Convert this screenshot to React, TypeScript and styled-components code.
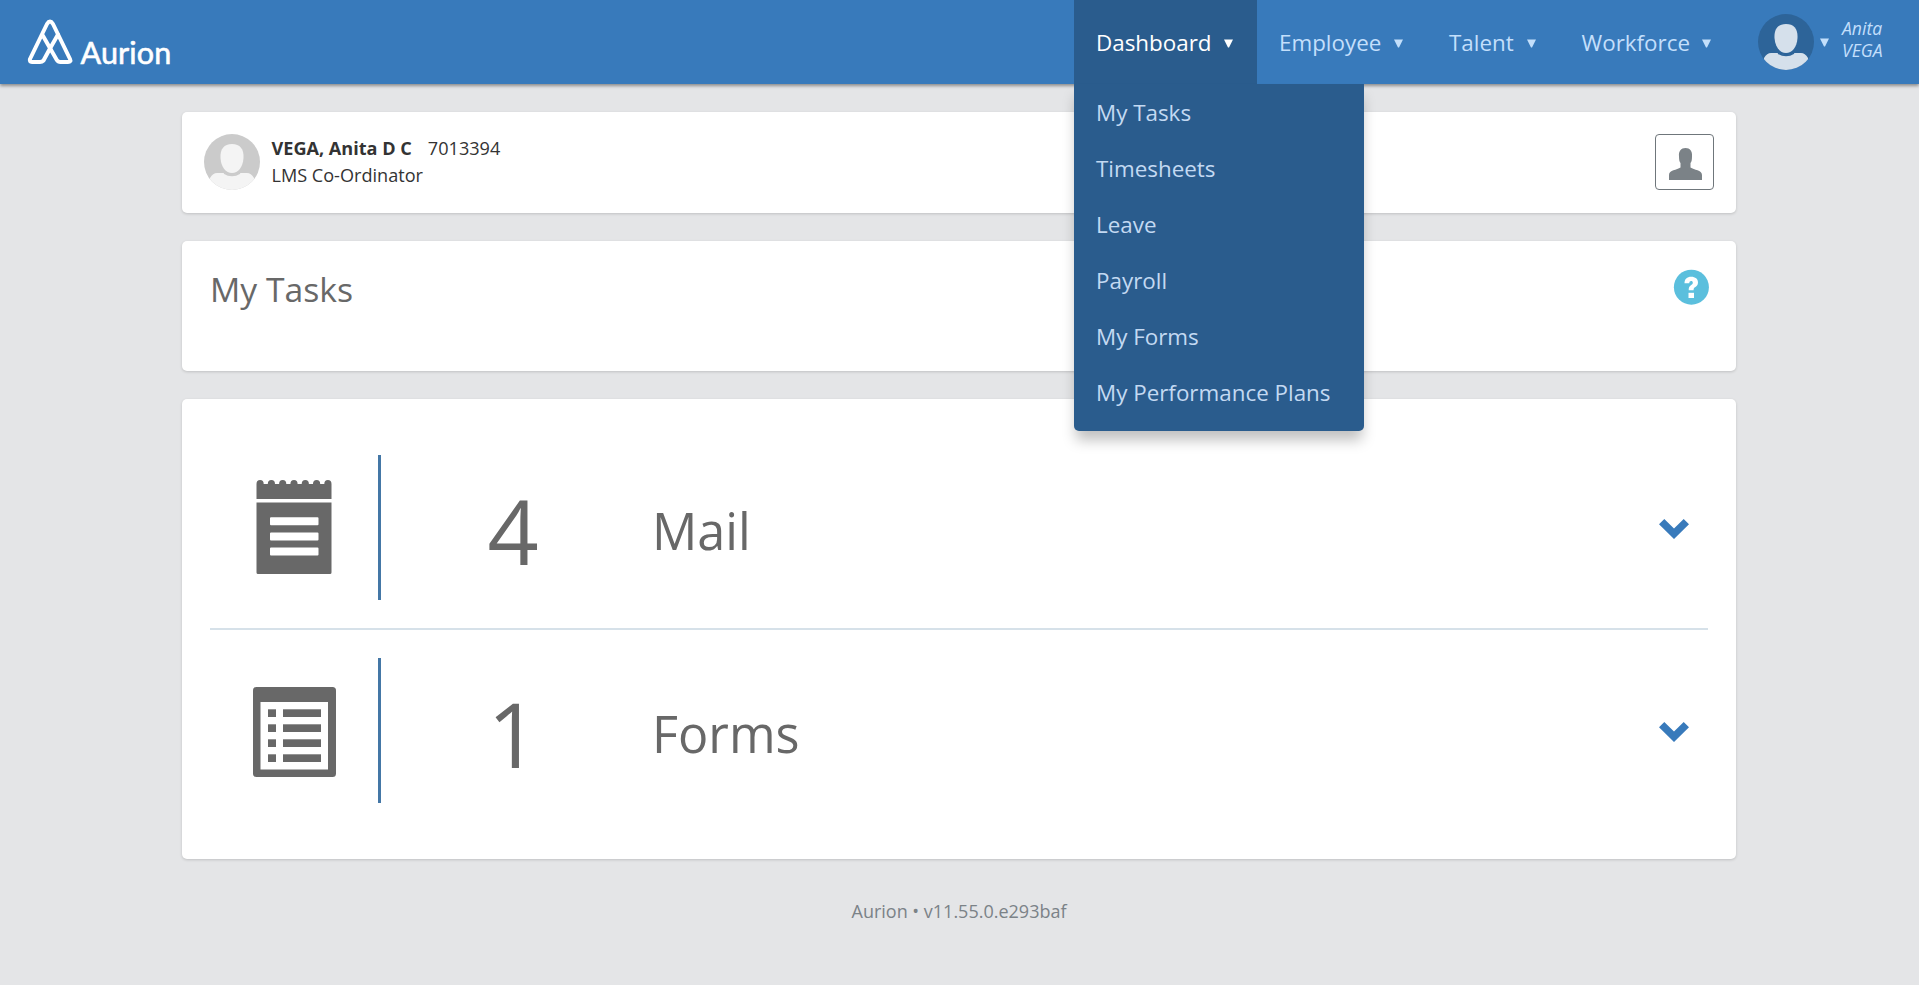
import React from "react";
import styled, { createGlobalStyle } from "styled-components";

const GlobalStyle = createGlobalStyle`
  *, *::before, *::after { box-sizing: border-box; }
  html, body { margin: 0; min-height: 100%; background: #e4e5e7; }
  body { font-family: "Open Sans", "Noto Sans", sans-serif; color: #333; }
`;

const Page = styled.div`
  min-height: 985px;
`;

const Header = styled.header`
  position: relative;
  z-index: 2;
  display: flex;
  justify-content: space-between;
  height: 84px;
  padding-right: 35px;
  background: #387abb;
  box-shadow: 0 2px 3px rgba(0, 0, 0, 0.38);
`;

const Brand = styled.div`
  display: flex;
  align-items: flex-start;
  padding: 19px 0 0 27px;
`;

const BrandMark = styled.svg`
  width: 47px;
  height: 46px;
`;

const BrandName = styled.span`
  margin: 12.5px 0 0 6.5px;
  font: 400 30.5px/40px Lato, sans-serif;
  letter-spacing: 0.15px;
  color: #fff;
  -webkit-text-stroke: 0.6px #fff;
`;

const Nav = styled.nav`
  display: flex;
`;

const NavItem = styled.div<{ $active?: boolean; $width: number }>`
  position: relative;
  display: flex;
  align-items: center;
  justify-content: space-between;
  width: ${(p) => p.$width}px;
  padding: 2px 24px 0 22px;
  font-size: 22.4px;
  line-height: 28px;
  white-space: nowrap;
  color: ${(p) => (p.$active ? "#fff" : "#c3dffb")};
  background: ${(p) => (p.$active ? "#2a5c8d" : "transparent")};
`;

const ArrowShape = styled.svg`
  display: block;
  width: 9px;
  height: 9px;
  fill: currentColor;
`;

const Menu = styled.ul`
  position: absolute;
  top: 84px;
  left: 0;
  width: 290.4px;
  height: 347px;
  margin: 0;
  padding: 0 0 11px;
  list-style: none;
  color: #c3d9f2;
  background: #2a5c8d;
  border-radius: 0 0 5px 5px;
  box-shadow: 0 11px 14px -2px rgba(0, 0, 0, 0.25);
`;

const MenuItem = styled.li`
  height: 56px;
  padding: 15px 22px 0;
`;

const UserMenu = styled.div`
  display: flex;
  align-items: flex-start;
  padding: 14px 0 0 23px;
  color: #c3dffb;
`;

const UserArrow = styled.div`
  margin: 24px 13px 0 6px;
`;

const UserName = styled.div`
  width: 42px;
  margin-top: 3px;
  font-size: 17.6px;
  line-height: 22px;
  font-style: italic;
`;

const Main = styled.main`
  display: flex;
  flex-direction: column;
  gap: 28px;
  width: 1554px;
  margin: 28px 0 0 182px;
`;

const Card = styled.section`
  background: #fff;
  border-radius: 5px;
  box-shadow: 0 1px 3px rgba(0, 0, 0, 0.16);
`;

const PersonCard = styled(Card)`
  display: flex;
  align-items: flex-start;
  height: 101px;
  padding: 22px;
`;

const PersonText = styled.div`
  flex: 1;
  margin: 1px 0 0 11.5px;
  font-size: 18.1px;
  line-height: 27px;
`;

const PersonId = styled.span`
  margin-left: 16px;
`;

const ProfileButton = styled.button`
  display: flex;
  align-items: center;
  justify-content: center;
  width: 59px;
  height: 56px;
  padding: 3px 0 0 2px;
  background: #fff;
  border: 1px solid #6f767b;
  border-radius: 4px;
`;

const TitleCard = styled(Card)`
  display: flex;
  align-items: flex-start;
  justify-content: space-between;
  height: 130px;
  padding: 28px 27px 0 28px;
`;

const Title = styled.h1`
  margin: 0;
  font-size: 33.7px;
  font-weight: 400;
  line-height: 41px;
  color: #686868;
`;

const TaskCard = styled(Card)`
  height: 460px;
  padding: 28px;
`;

const TaskRow = styled.div`
  display: flex;
  align-items: center;
  height: 201px;
  color: #686868;

  & + & {
    height: 203px;
    border-top: 2px solid #d6e1e9;
  }
`;

const TaskIcon = styled.div<{ $drop?: number }>`
  display: flex;
  align-items: center;
  justify-content: center;
  width: 168px;
  padding-top: ${(p) => p.$drop ?? 0}px;
`;

const Rule = styled.div`
  width: 3px;
  height: 145px;
  background: #4477a6;
`;

const Count = styled.div`
  width: 264px;
  padding-top: 4px;
  text-align: center;
  font-size: 89.6px;
  line-height: 120px;
`;

const TaskName = styled.div`
  flex: 1;
  padding: 6px 0 0 7px;
  font-size: 50.4px;
  line-height: 70px;
`;

const Chevron = styled.svg`
  width: 30px;
  height: 20px;
  margin: 3px 19px 0 0;
  fill: #387abb;
`;

const Footer = styled.footer`
  margin-top: 38px;
  padding-right: 1px;
  text-align: center;
  font-size: 18px;
  line-height: 28px;
  color: #7b8287;
`;

const Arrow = () => (
  <ArrowShape viewBox="0 0 9 9">
    <path d="M0 0.500H9L5 8.500H4Z" />
  </ArrowShape>
);

const Avatar = ({ id, back, front }: { id: string; back: string; front: string }) => (
  <svg width="56" height="56" viewBox="0 0 56 56">
    <clipPath id={id}>
      <circle cx="28" cy="28" r="28" />
    </clipPath>
    <circle cx="28" cy="28" r="28" fill={back} />
    <g clipPath={`url(#${id})`} fill={front}>
      <path d="M28 10C36 10 40 15 39.500 24C39 33 34 39 28 39C22 39 17 33 16.500 24C16 15 20 10 28 10Z" />
      <path d="M13 39H20Q28 43.500 36 39H43Q47 39 50 44V56H6V44Q9 39 13 39Z" />
      <path d="M20 39.200Q28 44 36 39.200" fill="none" stroke={back} strokeWidth="1.400" />
    </g>
  </svg>
);

const PersonIcon = () => (
  <svg width="33" height="32" viewBox="0 0 33 32" fill="#7b8287">
    <path d="M16.500 0C21 0 23.500 3 23 8.500C23 12 22.500 14 21.500 15V19.500C25 22 33 22 33 27V32H0V27C0 22 8 22 11.500 19.500V15C10.500 14 10 12 10 8.500C9.500 3 12 0 16.500 0Z" />
  </svg>
);

const HelpIcon = () => (
  <svg width="36" height="36" viewBox="0 0 36 36">
    <circle cx="18.400" cy="18.200" r="17.500" fill="#5bbfdd" />
    <path
      d="M11.500 14.300C11.500 10 14 7.800 18.200 7.800C22.300 7.800 25 10 25 13.500C25 16.300 23.500 17.300 22 18.300C20.800 19.100 20.600 19.500 20.600 21.300H15.700C15.600 18.300 16.400 17 18.200 15.900C19.300 15.200 19.800 14.800 19.800 13.700C19.800 12.600 19.200 12 18.200 12C16.900 12 16.400 12.800 16.300 14.300Z"
      fill="#fff"
    />
    <path d="M15.500 23.800H21V29H15.500Z" fill="#fff" />
  </svg>
);

const MailIcon = () => (
  <svg width="76" height="95" viewBox="0 0 76 95" fill="currentColor">
    <path d="M0.500 19V4A3.600 4 0 0 1 7.700 4H11.800A3.600 4 0 0 1 19 4H23.100A3.600 4 0 0 1 30.300 4H34.400A3.600 4 0 0 1 41.600 4H45.700A3.600 4 0 0 1 52.900 4H57A3.600 4 0 0 1 64.200 4H68.300A3.600 4 0 0 1 75.500 4V19Z" />
    <path
      fillRule="evenodd"
      d="M0.500 22.500H75.500V92.500Q75.500 94 74 94H2Q0.500 94 0.500 92.500ZM15 37.300Q14 37.300 14 38.300V44.300Q14 45.300 15 45.300H61.500Q62.500 45.300 62.500 44.300V38.300Q62.500 37.300 61.500 37.300ZM15 52.400Q14 52.400 14 53.400V59.400Q14 60.400 15 60.400H61.500Q62.500 60.400 62.500 59.400V53.400Q62.500 52.400 61.500 52.400ZM15 67.500Q14 67.500 14 68.500V74.500Q14 75.500 15 75.500H61.500Q62.500 75.500 62.500 74.500V68.500Q62.500 67.500 61.500 67.500Z"
    />
  </svg>
);

const FormsIcon = () => (
  <svg width="83" height="90" viewBox="0 0 83 90">
    <rect width="83" height="90" rx="3.500" fill="currentColor" />
    <rect x="7.500" y="15" width="67.500" height="67.500" fill="#fff" />
    {[22.3, 37.3, 52.3, 67.3].map((y) => (
      <g key={y} fill="currentColor">
        <rect x="15" y={y} width="8" height="7.700" />
        <rect x="30" y={y} width="38" height="7.700" />
      </g>
    ))}
  </svg>
);

const menuItems = ["My Tasks", "Timesheets", "Leave", "Payroll", "My Forms", "My Performance Plans"];

const tasks = [
  { name: "Mail", count: 4, icon: <MailIcon />, drop: 0 },
  { name: "Forms", count: 1, icon: <FormsIcon />, drop: 3 },
];

export default function App() {
  return (
    <Page>
      <GlobalStyle />
      <Header>
        <Brand>
          <BrandMark viewBox="0 0 47 46" fill="none" stroke="#fff" strokeWidth="4" strokeLinejoin="round" strokeLinecap="round">
            <path d="M23 29.500L16.500 41.500Q15 43 13 43H5Q2 43 3 40L20 5Q23 0 26 5L43 40Q44.500 43 41 43H33.500Q31 43 29.800 41L15.500 16" />
            <path d="M31 15.500L23 29.500" />
          </BrandMark>
          <BrandName>Aurion</BrandName>
        </Brand>
        <Nav>
          <NavItem $active $width={183}>
            Dashboard
            <Arrow />
            <Menu>
              {menuItems.map((item) => (
                <MenuItem key={item}>{item}</MenuItem>
              ))}
            </Menu>
          </NavItem>
          <NavItem $width={170}>
            Employee
            <Arrow />
          </NavItem>
          <NavItem $width={132.5}>
            Talent
            <Arrow />
          </NavItem>
          <NavItem $width={175.5}>
            Workforce
            <Arrow />
          </NavItem>
          <UserMenu>
            <Avatar id="nav-avatar" back="#2d6499" front="#d5e0eb" />
            <UserArrow>
              <Arrow />
            </UserArrow>
            <UserName>
              Anita
              <br />
              VEGA
            </UserName>
          </UserMenu>
        </Nav>
      </Header>
      <Main>
        <PersonCard>
          <Avatar id="card-avatar" back="#cbcbcb" front="#f4f4f4" />
          <PersonText>
            <div>
              <b>VEGA, Anita D C</b>
              <PersonId>7013394</PersonId>
            </div>
            <div>LMS Co-Ordinator</div>
          </PersonText>
          <ProfileButton aria-label="Profile">
            <PersonIcon />
          </ProfileButton>
        </PersonCard>
        <TitleCard>
          <Title>My Tasks</Title>
          <HelpIcon />
        </TitleCard>
        <TaskCard>
          {tasks.map((task) => (
            <TaskRow key={task.name}>
              <TaskIcon $drop={task.drop}>{task.icon}</TaskIcon>
              <Rule />
              <Count>{task.count}</Count>
              <TaskName>{task.name}</TaskName>
              <Chevron viewBox="0 0 30 20">
                <path d="M0 5.300L5.300 0L15 9.500L24.700 0L30 5.300L15 20Z" />
              </Chevron>
            </TaskRow>
          ))}
        </TaskCard>
      </Main>
      <Footer>Aurion • v11.55.0.e293baf</Footer>
    </Page>
  );
}
